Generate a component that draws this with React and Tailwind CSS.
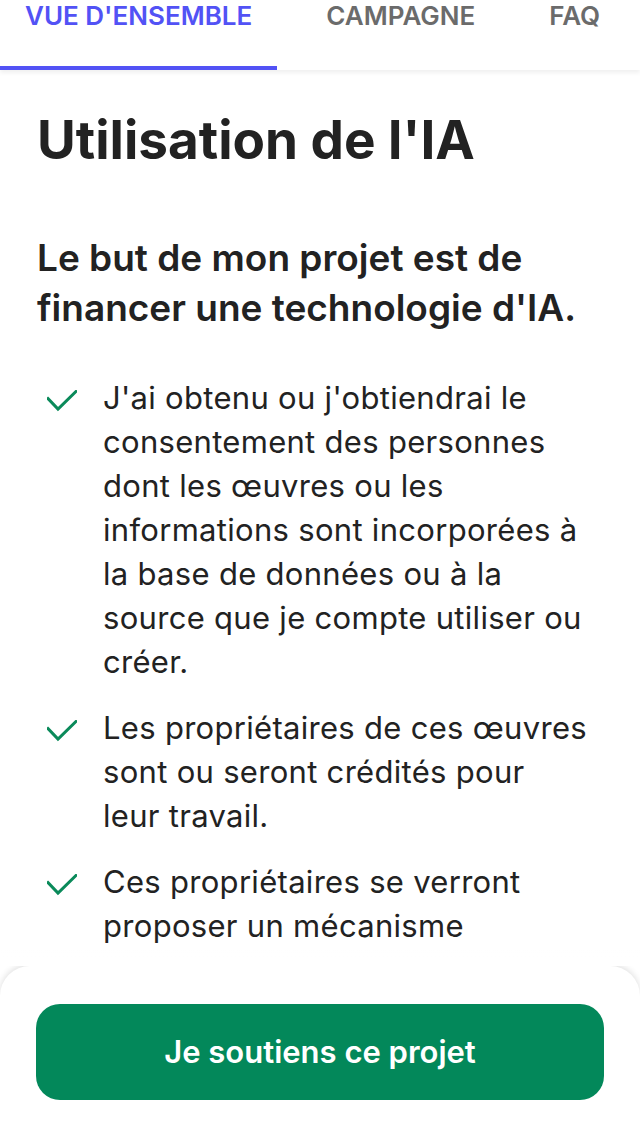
import React from "react";

const Check = () => (
  <svg width="30" height="22" viewBox="0 0 30 22" className="shrink-0 mt-[14px]" fill="none">
    <polyline points="1,8.5 11,19 29,1.5" stroke="#0a8a5a" strokeWidth="3" strokeLinecap="square" strokeLinejoin="miter" />
  </svg>
);

const items = [
  "J'ai obtenu ou j'obtiendrai le consentement des personnes dont les œuvres ou les informations sont incorporées à la base de données ou à la source que je compte utiliser ou créer.",
  "Les propriétaires de ces œuvres sont ou seront crédités pour leur travail.",
  "Ces propriétaires se verront proposer un mécanisme d'indemnisation équitable pour leur contribution.",
];

export default function App() {
  return (
    <div className="min-h-[1136px] bg-white text-[#222222]" style={{ fontFamily: "Inter, 'Noto Sans', sans-serif" }}>
      <div className="flex h-[70px] bg-white shadow-[0_3px_4px_rgba(0,0,0,0.06)] gap-[24px]">
        <div className="h-[70px] px-[25px] border-b-4 border-[#5252f5] text-[#5252f5] text-[26px] font-semibold leading-[32px] whitespace-nowrap">
          VUE D'ENSEMBLE
        </div>
        <div className="h-[70px] px-[25px] text-[#6b6b6b] text-[26px] font-semibold leading-[32px] whitespace-nowrap">
          CAMPAGNE
        </div>
        <div className="h-[70px] px-[25px] text-[#6b6b6b] text-[26px] font-semibold leading-[32px] whitespace-nowrap">
          FAQ
        </div>
      </div>

      <div className="h-[1066px] overflow-hidden pl-[37px] pr-[37px] pt-[42px]">
        <h1 className="text-[53px] font-bold leading-[56px]">Utilisation de l'IA</h1>
        <h2 className="mt-[65px] text-[37px] font-semibold leading-[50px]">
          Le but de mon projet est de financer une technologie d'IA.
        </h2>
        <ul className="mt-[43px] flex flex-col gap-[22px]">
          {items.map((t, i) => (
            <li key={i} className="flex gap-[26px] pl-[10px]">
              <Check />
              <span className="max-w-[485px] text-[31px] leading-[44px] tracking-[0.3px]">{t}</span>
            </li>
          ))}
        </ul>
      </div>

      <div className="fixed bottom-0 left-0 right-0 h-[170px] bg-white rounded-t-[30px] shadow-[0_-2px_6px_rgba(0,0,0,0.12)] px-[36px] pt-[38px]">
        <div className="absolute left-0 right-0 -top-[18px] h-[18px] bg-gradient-to-b from-white/0 via-white to-white" />
        <button className="w-full h-[96px] rounded-[24px] bg-[#03885a] text-white text-[31px] font-semibold">
          Je soutiens ce projet
        </button>
      </div>
    </div>
  );
}
